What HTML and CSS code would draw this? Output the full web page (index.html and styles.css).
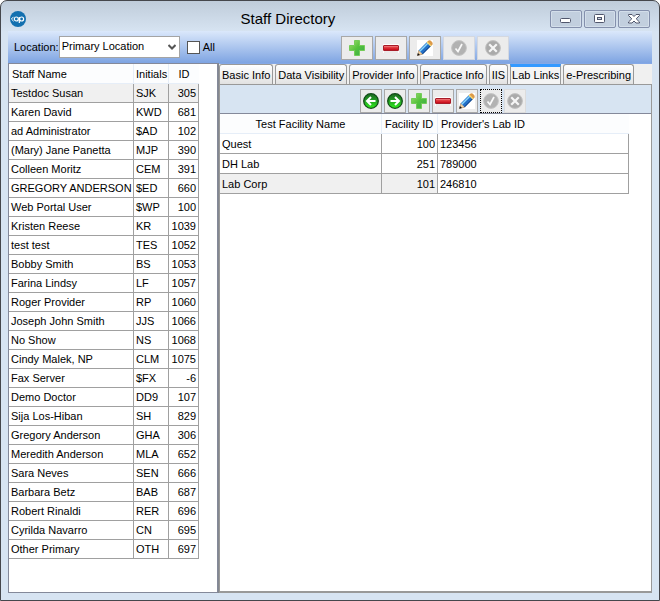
FILE: index.html
```html
<!DOCTYPE html>
<html lang="en">
<head>
    <meta charset="UTF-8">
    <meta name="viewport" content="width=device-width, initial-scale=1.0">
    <title>Staff Directory</title>

    <link rel="stylesheet" href="styles.css">
</head>
<body>
    <!-- icon set, used by both toolbars -->
    <svg class="icon-defs" aria-hidden="true">
        <defs>
            <linearGradient id="plusfill" x1="0" y1="0" x2="1" y2="1">
                <stop offset="0" stop-color="#a4dc70"/>
                <stop offset="0.5" stop-color="#54c23c"/>
                <stop offset="1" stop-color="#38a850"/>
            </linearGradient>
            <linearGradient id="minusfill" x1="0" y1="0" x2="0" y2="1">
                <stop offset="0" stop-color="#f4a0a0"/>
                <stop offset="0.4" stop-color="#e23a40"/>
                <stop offset="1" stop-color="#c00010"/>
            </linearGradient>
            <linearGradient id="greenfill" x1="0" y1="0" x2="0" y2="1">
                <stop offset="0" stop-color="#1d6a22"/>
                <stop offset="0.5" stop-color="#22a222"/>
                <stop offset="1" stop-color="#30f01c"/>
            </linearGradient>
        </defs>
        <symbol id="plus" viewBox="0 0 16 16">
            <path d="M5.5 0.5h5v5h5v5h-5v5h-5v-5h-5v-5h5z" fill="url(#plusfill)" stroke="#74cc58" stroke-width="1"/>
        </symbol>
        <symbol id="minus" viewBox="0 0 16 16">
            <rect x="0" y="4" width="16" height="9" fill="#fff"/>
            <rect x="0.5" y="5.5" width="15" height="5" rx="0.5" fill="url(#minusfill)" stroke="#a81c28"/>
            <path d="M1 12h14" stroke="#d8d4d4"/>
        </symbol>
        <symbol id="pencil" viewBox="0 0 16 16">
            <rect width="16" height="16" fill="#fff"/>
            <path d="M0.5 15.5L1.8 10.2L5.8 14.2z" fill="#f0cfa0" stroke="#8a6a48" stroke-width="0.5"/>
            <path d="M0.2 15.8L0.9 13L3 15.1z" fill="#111"/>
            <path d="M1.8 10.2L10 2L14 6L5.8 14.2z" fill="#2470c8"/>
            <path d="M2.8 11.2L11 3" stroke="#8cd8fc" stroke-width="1.5"/>
            <path d="M5.5 13.9L13.7 5.7" stroke="#123c78" stroke-width="1"/>
            <path d="M10 2L11.6 0.5Q13 -0.2 14.6 1.4Q16.2 3 15.5 4.4L14 6z" fill="#dc9a48"/>
            <path d="M10 2L14 6" stroke="#f8d870" stroke-width="1.2"/>
        </symbol>
        <symbol id="check" viewBox="0 0 16 16">
            <circle cx="8" cy="8" r="7.4" fill="#b2b2b2" stroke="#c6c6c6"/>
            <path d="M4.5 8.5L7 11.5L11 4" fill="none" stroke="#fafafa" stroke-width="1.7"/>
        </symbol>
        <symbol id="cancel" viewBox="0 0 16 16">
            <circle cx="8" cy="8" r="7.4" fill="#aaa" stroke="#c2c2c2"/>
            <path d="M5 5L11 11M11 5L5 11" stroke="#f6f6f6" stroke-width="2.2" stroke-linecap="square"/>
        </symbol>
        <symbol id="next" viewBox="0 0 16 16">
            <circle cx="8" cy="8" r="7.3" fill="url(#greenfill)" stroke="#124c18" stroke-width="1.3"/>
            <path d="M3.5 8H12M8 4L12 8L8 12" fill="none" stroke="#fff" stroke-width="2"/>
        </symbol>
        <symbol id="prev" viewBox="0 0 16 16">
            <circle cx="8" cy="8" r="7.3" fill="url(#greenfill)" stroke="#124c18" stroke-width="1.3"/>
            <path d="M12.5 8H4M8 4L4 8L8 12" fill="none" stroke="#fff" stroke-width="2"/>
        </symbol>
    </svg>

    <div class="window">
        <header class="titlebar">
            <svg class="logo" viewBox="0 0 16 16" aria-hidden="true">
                <circle cx="8" cy="8" r="8" fill="#1370b0"/>
                <path d="M3.6 5.8L1.4 8L3.6 10.2" fill="none" stroke="#fff" stroke-width="1"/>
                <circle cx="6.3" cy="8" r="2" fill="none" stroke="#fff" stroke-width="1.2"/>
                <circle cx="11.6" cy="8" r="2" fill="none" stroke="#fff" stroke-width="1.2"/>
                <path d="M9.3 6V12" stroke="#fff" stroke-width="1.2"/>
            </svg>
            <h1>Staff Directory</h1>
            <div class="winbuttons">
                <button type="button" aria-label="Minimize">
                    <svg viewBox="0 0 12 10"><rect x="0.5" y="4.5" width="10" height="4" rx="1" fill="#fff" stroke="#50566c"/></svg>
                </button>
                <button type="button" aria-label="Maximize">
                    <svg viewBox="0 0 12 10"><rect x="0.5" y="0.5" width="10" height="8" rx="1" fill="#fff" stroke="#50566c"/><rect x="3.5" y="3.5" width="4" height="2" fill="#ccd6e4" stroke="#50566c"/></svg>
                </button>
                <button type="button" aria-label="Close">
                    <svg viewBox="0 0 12 10"><path d="M0.5 0.5H4L6 2.5L8 0.5H11.5V1.5L8.2 4.8L11.5 8V9H8L6 7L4 9H0.5V8L3.8 4.8L0.5 1.5z" fill="#fff" stroke="#50566c"/></svg>
                </button>
            </div>
        </header>

        <div class="toolbar">
            <div class="filter">
                <label for="location">Location:</label>
                <div class="combo">
                    <select id="location">
                        <option>Primary Location</option>
                    </select>
                    <svg viewBox="0 0 8 6" aria-hidden="true"><path d="M0.5 1L4 4.5L7.5 1" fill="none" stroke="#555" stroke-width="2"/></svg>
                </div>
                <input type="checkbox" id="all">
                <label for="all">All</label>
            </div>
            <div class="tools">
                <button type="button" aria-label="Add"><svg><use href="#plus"/></svg></button>
                <button type="button" aria-label="Delete"><svg><use href="#minus"/></svg></button>
                <button type="button" aria-label="Edit"><svg><use href="#pencil"/></svg></button>
                <button type="button" aria-label="Save" disabled><svg><use href="#check"/></svg></button>
                <button type="button" aria-label="Cancel" disabled><svg><use href="#cancel"/></svg></button>
            </div>
        </div>

        <main class="panes">
            <section class="staff">
                <table class="grid stafftable">
                    <thead>
                        <tr><th class="name">Staff Name</th><th class="initials">Initials</th><th class="id">ID</th></tr>
                    </thead>
                    <tbody>
                        <tr class="selected"><td>Testdoc Susan</td><td>SJK</td><td class="num">305</td></tr>
                        <tr><td>Karen David</td><td>KWD</td><td class="num">681</td></tr>
                        <tr><td>ad Administrator</td><td>$AD</td><td class="num">102</td></tr>
                        <tr><td>(Mary) Jane Panetta</td><td>MJP</td><td class="num">390</td></tr>
                        <tr><td>Colleen Moritz</td><td>CEM</td><td class="num">391</td></tr>
                        <tr><td>GREGORY ANDERSON</td><td>$ED</td><td class="num">660</td></tr>
                        <tr><td>Web Portal User</td><td>$WP</td><td class="num">100</td></tr>
                        <tr><td>Kristen Reese</td><td>KR</td><td class="num">1039</td></tr>
                        <tr><td>test test</td><td>TES</td><td class="num">1052</td></tr>
                        <tr><td>Bobby Smith</td><td>BS</td><td class="num">1053</td></tr>
                        <tr><td>Farina Lindsy</td><td>LF</td><td class="num">1057</td></tr>
                        <tr><td>Roger Provider</td><td>RP</td><td class="num">1060</td></tr>
                        <tr><td>Joseph John Smith</td><td>JJS</td><td class="num">1066</td></tr>
                        <tr><td>No Show</td><td>NS</td><td class="num">1068</td></tr>
                        <tr><td>Cindy Malek, NP</td><td>CLM</td><td class="num">1075</td></tr>
                        <tr><td>Fax Server</td><td>$FX</td><td class="num">-6</td></tr>
                        <tr><td>Demo Doctor</td><td>DD9</td><td class="num">107</td></tr>
                        <tr><td>Sija Los-Hiban</td><td>SH</td><td class="num">829</td></tr>
                        <tr><td>Gregory Anderson</td><td>GHA</td><td class="num">306</td></tr>
                        <tr><td>Meredith Anderson</td><td>MLA</td><td class="num">652</td></tr>
                        <tr><td>Sara Neves</td><td>SEN</td><td class="num">666</td></tr>
                        <tr><td>Barbara Betz</td><td>BAB</td><td class="num">687</td></tr>
                        <tr><td>Robert Rinaldi</td><td>RER</td><td class="num">696</td></tr>
                        <tr><td>Cyrilda Navarro</td><td>CN</td><td class="num">695</td></tr>
                        <tr><td>Other Primary</td><td>OTH</td><td class="num">697</td></tr>
                    </tbody>
                </table>
            </section>

            <section class="details">
                <div class="tabs" role="tablist">
                    <button type="button" role="tab">Basic Info</button>
                    <button type="button" role="tab">Data Visibility</button>
                    <button type="button" role="tab">Provider Info</button>
                    <button type="button" role="tab">Practice Info</button>
                    <button type="button" role="tab">IIS</button>
                    <button type="button" role="tab" class="active" aria-selected="true">Lab Links</button>
                    <button type="button" role="tab">e-Prescribing</button>
                </div>
                <div class="tabpanel" role="tabpanel">
                    <div class="tools small">
                        <button type="button" aria-label="Previous"><svg><use href="#prev"/></svg></button>
                        <button type="button" aria-label="Next"><svg><use href="#next"/></svg></button>
                        <button type="button" aria-label="Add link"><svg><use href="#plus"/></svg></button>
                        <button type="button" aria-label="Delete link"><svg><use href="#minus"/></svg></button>
                        <button type="button" aria-label="Edit link"><svg><use href="#pencil"/></svg></button>
                        <button type="button" aria-label="Save link" class="focused" disabled><svg><use href="#check"/></svg></button>
                        <button type="button" aria-label="Cancel link" disabled><svg><use href="#cancel"/></svg></button>
                    </div>
                    <div class="links">
                        <table class="grid linktable">
                            <thead>
                                <tr><th class="facility">Test Facility Name</th><th class="facilityid">Facility ID</th><th class="labid">Provider's Lab ID</th></tr>
                            </thead>
                            <tbody>
                                <tr><td>Quest</td><td class="num">100</td><td>123456</td></tr>
                                <tr><td>DH Lab</td><td class="num">251</td><td>789000</td></tr>
                                <tr class="current"><td>Lab Corp</td><td class="num">101</td><td>246810</td></tr>
                            </tbody>
                        </table>
                    </div>
                </div>
            </section>
        </main>
    </div>
</body>
</html>
```

FILE: styles.css
```css
*
{
    box-sizing: border-box;
}

body
{
    margin: 0;
    background: #fff;
    font-family: "Liberation Sans", Arial, sans-serif;
    font-size: 11px;
    color: #000;
}

button,select,input
{
    margin: 0;
    padding: 0;
    font: inherit;
    color: inherit;
}

.icon-defs
{
    display: block;
    width: 0;
    height: 0;
}

.window
{
    min-height: 100vh;
    display: flex;
    flex-direction: column;
    padding: 0 7px 7px;
    border: 1px solid #45474c;
    border-radius: 7px 7px 0 0;
    background: linear-gradient(#bfccda, #d7e4f2 31px);
}

/* title bar */
.titlebar
{
    height: 30px;
    display: grid;
    grid-template-columns: auto 1fr auto;
    align-items: center;
    padding: 6px 2px 0;
}

.logo
{
    width: 16px;
    height: 16px;
}

.titlebar h1
{
    margin: 0;
    font-size: 15px;
    font-weight: normal;
    line-height: 18px;
    text-align: center;
}

.winbuttons
{
    display: flex;
    gap: 2px;
}

.winbuttons button
{
    width: 32px;
    height: 18px;
    display: flex;
    align-items: center;
    justify-content: center;
    border: 1px solid #8490ac;
    border-radius: 2px;
    background: #c2cfde;
    box-shadow: inset 0 0 0 1px #d3deea;
}

.winbuttons svg
{
    width: 12px;
    height: 10px;
}

/* blue strip with the filter and the main buttons */
.toolbar
{
    height: 32px;
    display: grid;
    grid-template-columns: 333px 1fr;
    align-items: center;
    background: linear-gradient(#dbe8fb, #7ea4e2);
}

.toolbar .tools
{
    padding-top: 2px;
}

.filter
{
    display: flex;
    align-items: center;
    padding-left: 6px;
}

.combo
{
    display: grid;
    align-items: center;
    width: 121px;
    margin-right: 7px;
}

.combo select,.combo svg
{
    grid-area: 1 / 1;
}

.combo select
{
    appearance: none;
    width: 100%;
    height: 22px;
    padding: 0 18px 2px 2px;
    border: 1px solid #a4a4a4;
    border-radius: 0;
    background: #fff;
}

.combo svg
{
    width: 8px;
    height: 6px;
    justify-self: end;
    margin-right: 4px;
    pointer-events: none;
}

.filter input
{
    appearance: none;
    width: 13px;
    height: 13px;
    margin-right: 3px;
    border: 1px solid #555;
    background: #fff;
}

.tools
{
    display: flex;
    gap: 2px;
}

.tools button
{
    width: 32px;
    height: 24px;
    display: flex;
    align-items: center;
    justify-content: center;
    border: 1px solid #a8a8a8;
    background: #ececec;
}

.tools button:disabled
{
    border-color: #d4d8e0;
}

.tools svg
{
    width: 16px;
    height: 16px;
}

.tools.small
{
    justify-content: center;
    height: 28px;
    padding: 4px 0 0 14px;
}

.tools.small button
{
    width: 22px;
}

.tools.small button:disabled
{
    border-color: #dcdcdc;
}

.tools.small button.focused
{
    border: 1px dotted #000;
}

/* panes */
.panes
{
    flex: 1;
    display: grid;
    grid-template-columns: 210px 1fr;
}

.staff
{
    border: 1px solid #84899a;
    background: #fff;
}

.details
{
    display: flex;
    flex-direction: column;
    background: #efefef;
    border-left: 1px solid #84888f;
}

.tabs
{
    display: flex;
    height: 21px;
    gap: 2px;
    border-top: 1px solid #84a8e6;
    background: #f0f0f0;
}

.tabs button
{
    padding: 1px 2px 0;
    border: 1px solid #999;
    border-bottom: none;
    border-radius: 3px 3px 0 0;
    background: linear-gradient(#fff, #e2e2e2);
    white-space: nowrap;
}

.tabs button.active
{
    margin-bottom: -1px;
    padding: 0 1px 2px;
    border-top: 3px solid #3399ff;
    border-radius: 0;
    background: #f4f4f4;
}

.tabpanel
{
    flex: 1;
    display: flex;
    flex-direction: column;
    border: 1px solid #999;
    border-bottom-width: 2px;
    background: #d7e4f2;
}

.links
{
    flex: 1;
    border-top: 1px solid #84899a;
    background: #fff;
}

/* data grids */
.grid
{
    table-layout: fixed;
    border-collapse: separate;
    border-spacing: 0;
}

.grid th
{
    height: 20px;
    padding: 0 3px;
    border-right: 1px solid #e6eef8;
    border-bottom: 1px solid #e6eef8;
    background: #fcfdfe;
    font-weight: normal;
    text-align: left;
}

.grid th:last-child
{
    border-right: none;
}

.grid td
{
    height: 19px;
    padding: 0 2px;
    border-right: 1px solid #a0a0a0;
    border-bottom: 1px solid #a0a0a0;
    white-space: nowrap;
}

.grid .num
{
    text-align: right;
}

.stafftable
{
    width: 190px;
}

.stafftable .initials
{
    width: 35px;
    padding: 0 2px;
}

.stafftable .id
{
    width: 30px;
    text-align: center;
}

.linktable
{
    width: 409px;
}

.linktable td
{
    height: 20px;
}

.linktable .facility
{
    width: 162px;
    text-align: center;
}

.linktable .facilityid
{
    width: 56px;
}

.linktable .current td:not(:last-child),.stafftable .selected td
{
    background: #f0f0f0;
}
```
